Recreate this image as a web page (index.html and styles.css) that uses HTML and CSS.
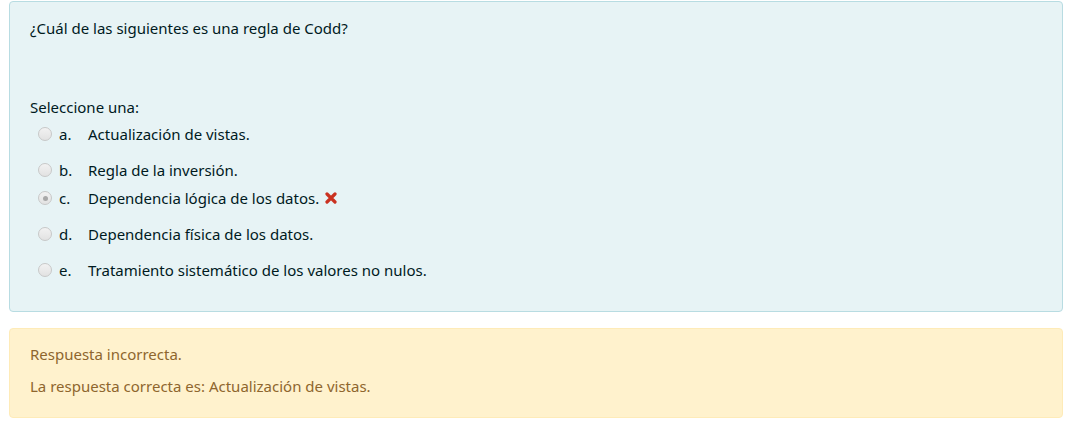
FILE: index.html
```html
<!DOCTYPE html>
<html lang="es">
<head>
<meta charset="utf-8">
<title>Pregunta</title>
<link rel="stylesheet" href="styles.css">
</head>
<body>
<div class="que">
  <div class="formulation">
    <p class="qtext">¿Cuál de las siguientes es una regla de Codd?</p>
    <div class="ablock">
      <div class="prompt">Seleccione una:</div>
      <div class="answer">
        <div class="option spaced">
          <span class="radio"></span>
          <span class="letter">a.</span>
          <span class="text">Actualización de vistas.</span>
        </div>
        <div class="option">
          <span class="radio"></span>
          <span class="letter">b.</span>
          <span class="text">Regla de la inversión.</span>
        </div>
        <div class="option spaced">
          <span class="radio checked"></span>
          <span class="letter">c.</span>
          <span class="text">Dependencia lógica de los datos.</span>
          <svg class="incorrect" width="12" height="12" viewBox="0 0 12 12" aria-hidden="true">
            <path d="M2 2 L10 10 M10 2 L2 10" stroke="#ca3120" stroke-width="3.2" stroke-linecap="round"/>
          </svg>
        </div>
        <div class="option spaced">
          <span class="radio"></span>
          <span class="letter">d.</span>
          <span class="text">Dependencia física de los datos.</span>
        </div>
        <div class="option">
          <span class="radio"></span>
          <span class="letter">e.</span>
          <span class="text">Tratamiento sistemático de los valores no nulos.</span>
        </div>
      </div>
    </div>
  </div>
  <div class="outcome">
    <p class="feedback">Respuesta incorrecta.</p>
    <p class="feedback">La respuesta correcta es: Actualización de vistas.</p>
  </div>
</div>
</body>
</html>
```

FILE: styles.css
```css
html, body {
  margin: 0;
  background: #ffffff;
}
body {
  padding: 1px 14px 0 9px;
  font-family: "Noto Sans", "Open Sans", sans-serif;
  font-size: 15px;
  line-height: 22px;
  color: #1d2125;
}
.que {
  display: flex;
  flex-direction: column;
  gap: 16px;
}
.formulation {
  background: #e7f3f5;
  border: 1px solid #b8dce2;
  border-radius: 4px;
  padding: 15px 20px 27px 20px;
  color: #001a1e;
}
.qtext {
  margin: 0 0 57px 0;
}
.prompt {
  margin-bottom: 2px;
}
.answer {
  display: flex;
  flex-direction: column;
}
.option {
  display: flex;
  align-items: center;
  height: 28px;
  padding-left: 8px;
}
.option.spaced {
  padding-bottom: 8px;
}
.radio {
  width: 12px;
  height: 12px;
  border: 1px solid #c8c8c8;
  border-radius: 50%;
  background: linear-gradient(#f2f2f2, #e2e2e2);
  box-sizing: content-box;
  margin-right: 7px;
  display: flex;
  align-items: center;
  justify-content: center;
  flex: none;
}
.radio.checked::after {
  content: "";
  width: 5px;
  height: 5px;
  border-radius: 50%;
  background: #a8a8a8;
}
.letter {
  width: 29px;
  flex: none;
}
.incorrect {
  margin-left: 6px;
  flex: none;
}
.outcome {
  background: #fff2cd;
  border: 1px solid #feebb8;
  border-radius: 4px;
  padding: 9px 20px 15px 20px;
  color: #8e662e;
}
.feedback {
  margin: 0;
  line-height: 32px;
}
```
